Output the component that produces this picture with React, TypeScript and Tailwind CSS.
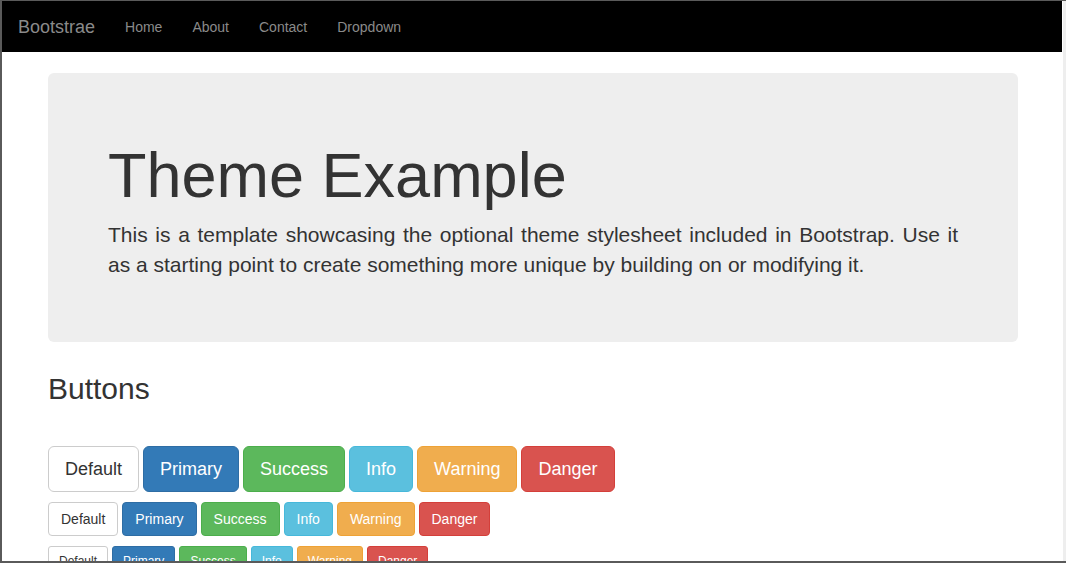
import React from 'react';

const font = { fontFamily: '"Liberation Sans", Arial, sans-serif' };

const variants: Record<string, string> = {
  Default: 'bg-white border-[#ccc] text-[#333]',
  Primary: 'bg-[#337ab7] border-[#2e6da4] text-white',
  Success: 'bg-[#5cb85c] border-[#4cae4c] text-white',
  Info: 'bg-[#5bc0de] border-[#46b8da] text-white',
  Warning: 'bg-[#f0ad4e] border-[#eea236] text-white',
  Danger: 'bg-[#d9534f] border-[#d43f3a] text-white',
};

const sizes: Record<string, string> = {
  lg: 'h-[46px] px-4 text-[18px] rounded-[6px]',
  md: 'h-[34px] px-3 text-[14px] rounded-[4px]',
  sm: 'h-[30px] px-[10px] text-[12px] rounded-[3px]',
};

const labels = ['Default', 'Primary', 'Success', 'Info', 'Warning', 'Danger'];

const ButtonRow: React.FC<{ size: 'lg' | 'md' | 'sm' }> = ({ size }) => (
  <div className="flex gap-1">
    {labels.map((label) => (
      <button
        key={label}
        className={`shrink-0 border flex items-center justify-center leading-none ${sizes[size]} ${variants[label]}`}
      >
        {label}
      </button>
    ))}
  </div>
);

export default function App() {
  return (
    <div
      className="w-[1066px] h-[563px] flex bg-white border-l-2 border-t border-b-2 border-[#5a5a5a] overflow-hidden"
      style={font}
    >
      <div className="flex-1 flex flex-col overflow-hidden">
        {/* Navbar */}
        <nav className="h-[51px] shrink-0 bg-black flex items-center pl-4 pt-[2px] text-[#8a8a8a]">
          <span className="text-[18px] pr-[15px]">Bootstrae</span>
          <ul className="flex text-[14px]">
            <li className="px-[15px]">Home</li>
            <li className="px-[15px]">About</li>
            <li className="px-[15px]">Contact</li>
            <li className="px-[15px]">Dropdown</li>
          </ul>
        </nav>

        <div className="pl-[46px] pt-[21px] text-[#333]">
          {/* Jumbotron */}
          <div className="w-[970px] h-[269px] bg-[#eee] rounded-[6px] px-[60px] pt-[68px]">
            <h1 className="text-[63px] leading-[69px] mb-[10px]">Theme Example</h1>
            <p className="text-[21px] leading-[30px] text-justify">
              This is a template showcasing the optional theme stylesheet included in Bootstrap. Use it as a
              starting point to create something more unique by building on or modifying it.
            </p>
          </div>

          <h2 className="text-[30px] leading-[33px] mt-[30px]">Buttons</h2>

          <div className="mt-[41px] flex flex-col gap-[10px]">
            <ButtonRow size="lg" />
            <ButtonRow size="md" />
            <ButtonRow size="sm" />
          </div>
        </div>
      </div>
      <div className="w-[4px] shrink-0 border-l border-white bg-[#eeeeee]" />
    </div>
  );
}
